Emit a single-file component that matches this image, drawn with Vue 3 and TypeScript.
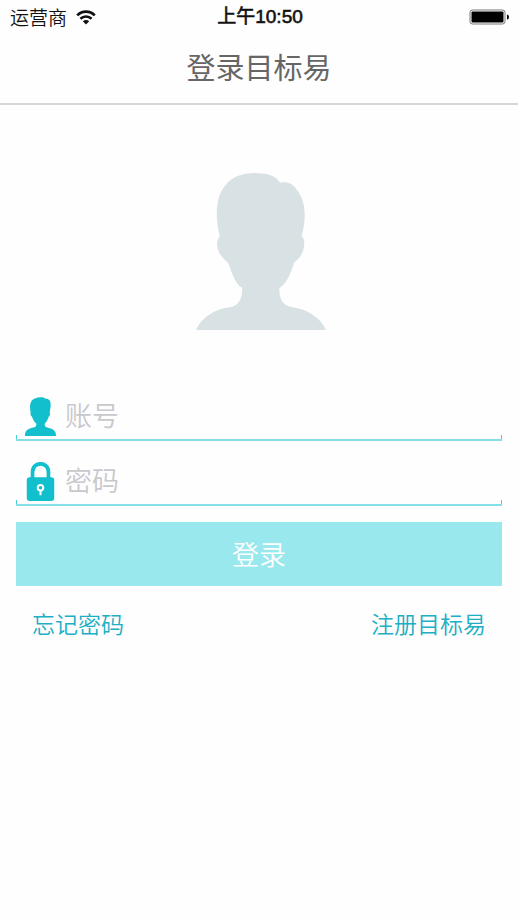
<script setup lang="ts">
import { ref } from 'vue'

const account = ref<string>('')
const password = ref<string>('')

const personPath =
  'M78 510C93 474 134 447 178 442C203 438 216 421 216 384C195 371 187 345 175 310C157 294 141 279 141 251C141 239 145 235 149 229C140 195 138 160 142 135C150 75 190 40 252 40C292 40 316 48 329 69C351 65 366 72 379 90C408 128 407 180 393 229C399 235 402 239 401 252C401 279 386 295 371 308C358 348 348 371 327 384C325 421 340 438 365 442C409 447 451 474 466 510Z'
const smallPersonPath =
  'M0 117C0 100 8 96 28 91C33 89 34 85 34 80C28 75 24 67 21 59C17 55 15 51 17 47C14 33 14 20 20 11C28 1 51-3 62 5C72 4 77 11 77 22C77 32 75 40 74 47C77 51 75 56 71 59C68 68 64 75 59 80C59 85 60 89 65 91C85 96 93 101 93 117Z'
</script>

<template>
  <div class="screen">
    <div class="status">
      <div class="carrier">
        <span>运营商</span>
        <svg class="wifi" viewBox="0 0 20 15" aria-hidden="true">
          <path d="M1.2 5.4C6.2.4 13.8.4 18.8 5.4" />
          <path d="M4.4 8.8C7.6 5.8 12.4 5.8 15.6 8.8" />
          <path class="dot" d="M6.8 11.3C8.7 9.6 11.3 9.6 13.2 11.3L10 14.6Z" />
        </svg>
      </div>
      <time class="time">上午10:50</time>
      <svg class="battery" viewBox="0 0 41 16" aria-hidden="true">
        <rect class="case" x="1" y="1" width="35" height="14" rx="2.5" />
        <rect x="2.5" y="2.5" width="32" height="11" rx="1" />
        <path d="M38 5.5Q40 5.5 40 8Q40 10.5 38 10.5Z" />
      </svg>
    </div>

    <header class="header">
      <h1>登录目标易</h1>
    </header>

    <main>
      <svg class="avatar" viewBox="69 40 397 470" preserveAspectRatio="none" aria-hidden="true">
        <path :d="personPath" />
      </svg>

      <form @submit.prevent>
        <div class="field">
          <label for="account" aria-label="账号">
            <svg class="person" viewBox="0 0 93 117" aria-hidden="true">
              <path :d="smallPersonPath" />
            </svg>
          </label>
          <input id="account" v-model="account" type="text" placeholder="账号" autocomplete="username" />
        </div>
        <div class="field">
          <label for="password" aria-label="密码">
            <svg class="lock" viewBox="0 0 81 115" aria-hidden="true">
              <path class="shackle" d="M17 50V30C17 -3 64 -3 64 30V50" />
              <rect y="45" width="81" height="70" rx="9" />
              <circle class="hole" cx="40.5" cy="76" r="8" />
              <path class="hole" d="M40.5 84V98" />
            </svg>
          </label>
          <input id="password" v-model="password" type="password" placeholder="密码" autocomplete="current-password" />
        </div>
        <button type="submit">登录</button>
      </form>

      <nav class="links">
        <a href="#forgot">忘记密码</a>
        <a href="#register">注册目标易</a>
      </nav>
    </main>
  </div>
</template>

<style>
body {
  background: #fefefe;
}
</style>

<style scoped>
.screen {
  min-height: 100vh;
  background: #fefefe;
  font-family: "Liberation Sans", "Noto Sans CJK SC", sans-serif;
}

.status {
  display: grid;
  grid-template-columns: 1fr auto 1fr;
  align-items: center;
  height: 34px;
  padding: 0 8px 0 10px;
  font-size: 19px;
  line-height: 34px;
  color: #111;
}

.carrier {
  display: flex;
  align-items: center;
  gap: 9px;
  font-family: "Noto Sans CJK SC", sans-serif;
  font-weight: 350;
}

.wifi {
  width: 20px;
  height: 15px;
  fill: none;
  stroke: #111;
  stroke-width: 2.6;
}

.wifi .dot {
  fill: #111;
  stroke: none;
}

.time {
  font-weight: 400;
  -webkit-text-stroke: 0.6px #111;
}

.battery {
  justify-self: end;
  width: 41px;
  height: 16px;
}

.battery .case {
  fill: none;
  stroke: #777;
}

.header {
  display: flex;
  align-items: center;
  justify-content: center;
  height: 69px;
  border-bottom: 2px solid #d6d6d6;
}

h1 {
  margin: 0;
  font-size: 29px;
  line-height: 70px;
  font-weight: 400;
  color: #666;
}

main {
  padding: 68px 16px 0;
}

.avatar {
  display: block;
  width: 133px;
  height: 157px;
  margin: 0 auto 46px;
  fill: #d8e1e3;
}

form {
  display: flex;
  flex-direction: column;
}

.field {
  position: relative;
  display: flex;
  align-items: center;
  height: 63px;
  padding-left: 9px;
  border-bottom: 2px solid #84e0e8;
}

.field::after {
  content: "";
  position: absolute;
  inset: auto 0 0;
  height: 4px;
  border: solid #48cfda;
  border-width: 0 1px;
}

label {
  display: flex;
  justify-content: center;
  width: 31px;
  margin-right: 9px;
  padding-top: 17px;
}

.person,
.lock {
  display: block;
  width: 31px;
  height: 39px;
  fill: #12bfcd;
}

.shackle {
  fill: none;
  stroke: #12bfcd;
  stroke-width: 11;
}

.hole {
  fill: none;
  stroke: #fefefe;
  stroke-width: 6;
}

input {
  flex: 1;
  min-width: 0;
  height: 40px;
  margin-top: 15px;
  padding: 0;
  border: 0;
  outline: 0;
  background: transparent;
  font: 350 27px/40px "Noto Sans CJK SC", sans-serif;
  color: #555;
}

input::placeholder {
  color: #c8c8cd;
  opacity: 1;
}

button {
  height: 64px;
  margin-top: 16px;
  padding: 0;
  border: 0;
  background: #98e8ee;
  font: 350 27px/64px "Noto Sans CJK SC", sans-serif;
  color: #fff;
}

.links {
  display: flex;
  justify-content: space-between;
  padding: 20px 16px;
  font: 350 23px/34px "Noto Sans CJK SC", sans-serif;
}

a {
  color: #20aec5;
  text-decoration: none;
}
</style>
